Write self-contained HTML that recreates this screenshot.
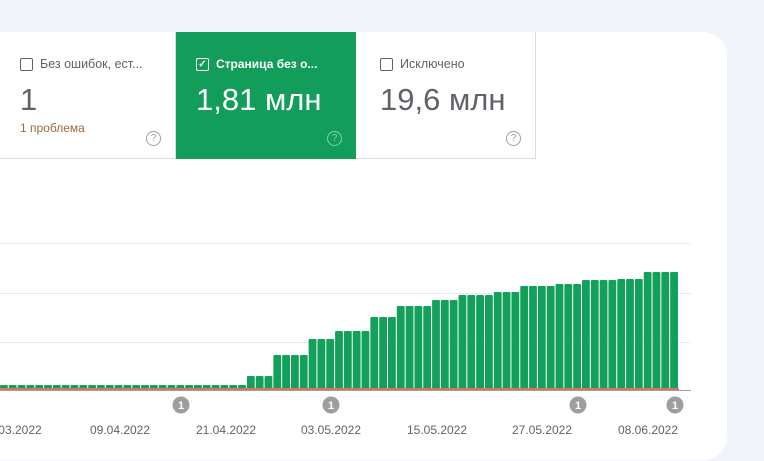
<!DOCTYPE html>
<html><head><meta charset="utf-8"><style>
body{margin:0;width:764px;height:461px;background:#f1f4fb;overflow:hidden;font-family:"Liberation Sans",Roboto,sans-serif;position:relative}
.card{position:absolute;left:-30px;top:32px;width:757px;height:428px;background:#fff;border-radius:24px}
.tile{position:absolute;top:32px;height:127px;box-sizing:border-box;border-right:1px solid #dadce0;border-bottom:1px solid #dadce0}
.lbl{position:absolute;top:25px;left:20px;font-size:12.5px;color:#5f6368;display:flex;align-items:center}
.cb{width:11px;height:11px;border:1.5px solid #5f6368;border-radius:2px;margin-right:7px;box-sizing:content-box}
.num{position:absolute;top:50px;left:20px;font-size:31px;color:#5f6368}
.q{position:absolute;right:14px;top:99px;width:13px;height:13px;border:1.3px solid #9aa0a6;border-radius:50%;font-size:10px;color:#9aa0a6;text-align:center;line-height:13px}
.d{position:absolute;top:423px;font-size:12px;color:#5f6368;transform:translateX(-50%)}
</style></head><body>
<div class="card"></div>
<div class="tile" style="left:0;width:176px">
 <div class="lbl"><div class="cb"></div>Без ошибок, ест...</div>
 <div class="num">1</div>
 <div style="position:absolute;left:20px;top:89px;font-size:12px;color:#9b6b3d">1 проблема</div>
 <div class="q">?</div>
</div>
<div class="tile" style="left:176px;width:180px;background:#129e5a;border:none">
 <div class="lbl" style="color:#fff;font-weight:bold;font-size:12px"><div class="cb" style="border-color:#fff;font-size:10px;line-height:11px;text-align:center;color:#fff">✓</div>Страница без о...</div>
 <div class="num" style="color:#fff">1,81 млн</div>
 <div class="q" style="border-color:#7fd0a6;color:#7fd0a6">?</div>
</div>
<div class="tile" style="left:356px;width:180px">
 <div class="lbl" style="left:24px"><div class="cb"></div>Исключено</div>
 <div class="num" style="left:24px">19,6 млн</div>
 <div class="q">?</div>
</div>
<svg style="position:absolute;left:0;top:0" width="764" height="461" id="s">
 <line x1="0" y1="243.5" x2="691" y2="243.5" stroke="#e8eaed"/>
 <line x1="0" y1="293.5" x2="691" y2="293.5" stroke="#e8eaed"/>
 <line x1="0" y1="342.5" x2="691" y2="342.5" stroke="#e8eaed"/>
 <g id="bars" fill="#13a05b"></g>
 <line x1="0" y1="390.5" x2="691" y2="390.5" stroke="#9e9e9e"/>
 <rect x="0" y="388" width="679" height="2" fill="#d9735f"/>
 <g fill="#9e9e9e">
  <circle cx="181" cy="405" r="8.5"/><circle cx="331" cy="405" r="8.5"/><circle cx="578" cy="405" r="8.5"/><circle cx="675" cy="405" r="8.5"/>
 </g>
 <g fill="#fff" font-size="11" font-weight="bold" text-anchor="middle" font-family="Liberation Sans">
  <text x="181" y="409">1</text><text x="331" y="409">1</text><text x="578" y="409">1</text><text x="675" y="409">1</text>
 </g>
</svg>
<div class="d" style="left:20px">03.2022</div>
<div class="d" style="left:120px">09.04.2022</div>
<div class="d" style="left:226px">21.04.2022</div>
<div class="d" style="left:331px">03.05.2022</div>
<div class="d" style="left:437px">15.05.2022</div>
<div class="d" style="left:542px">27.05.2022</div>
<div class="d" style="left:648px">08.06.2022</div>
<script>
var segs=[[28,385],[3,376],[4,355],[3,339],[4,331],[3,317],[4,306],[3,300],[4,295],[3,292],[4,286],[3,284],[4,280],[3,279],[4,272]];
var g=document.getElementById('bars'),i=0,p=679/77,h='';
segs.forEach(function(s){for(var k=0;k<s[0];k++){var x=i*p;h+='<rect x="'+(x).toFixed(2)+'" y="'+s[1]+'" width="'+(p-1).toFixed(2)+'" height="'+(390-s[1])+'" rx="1"/>';i++;}});
g.innerHTML=h;
</script>
</body></html>
